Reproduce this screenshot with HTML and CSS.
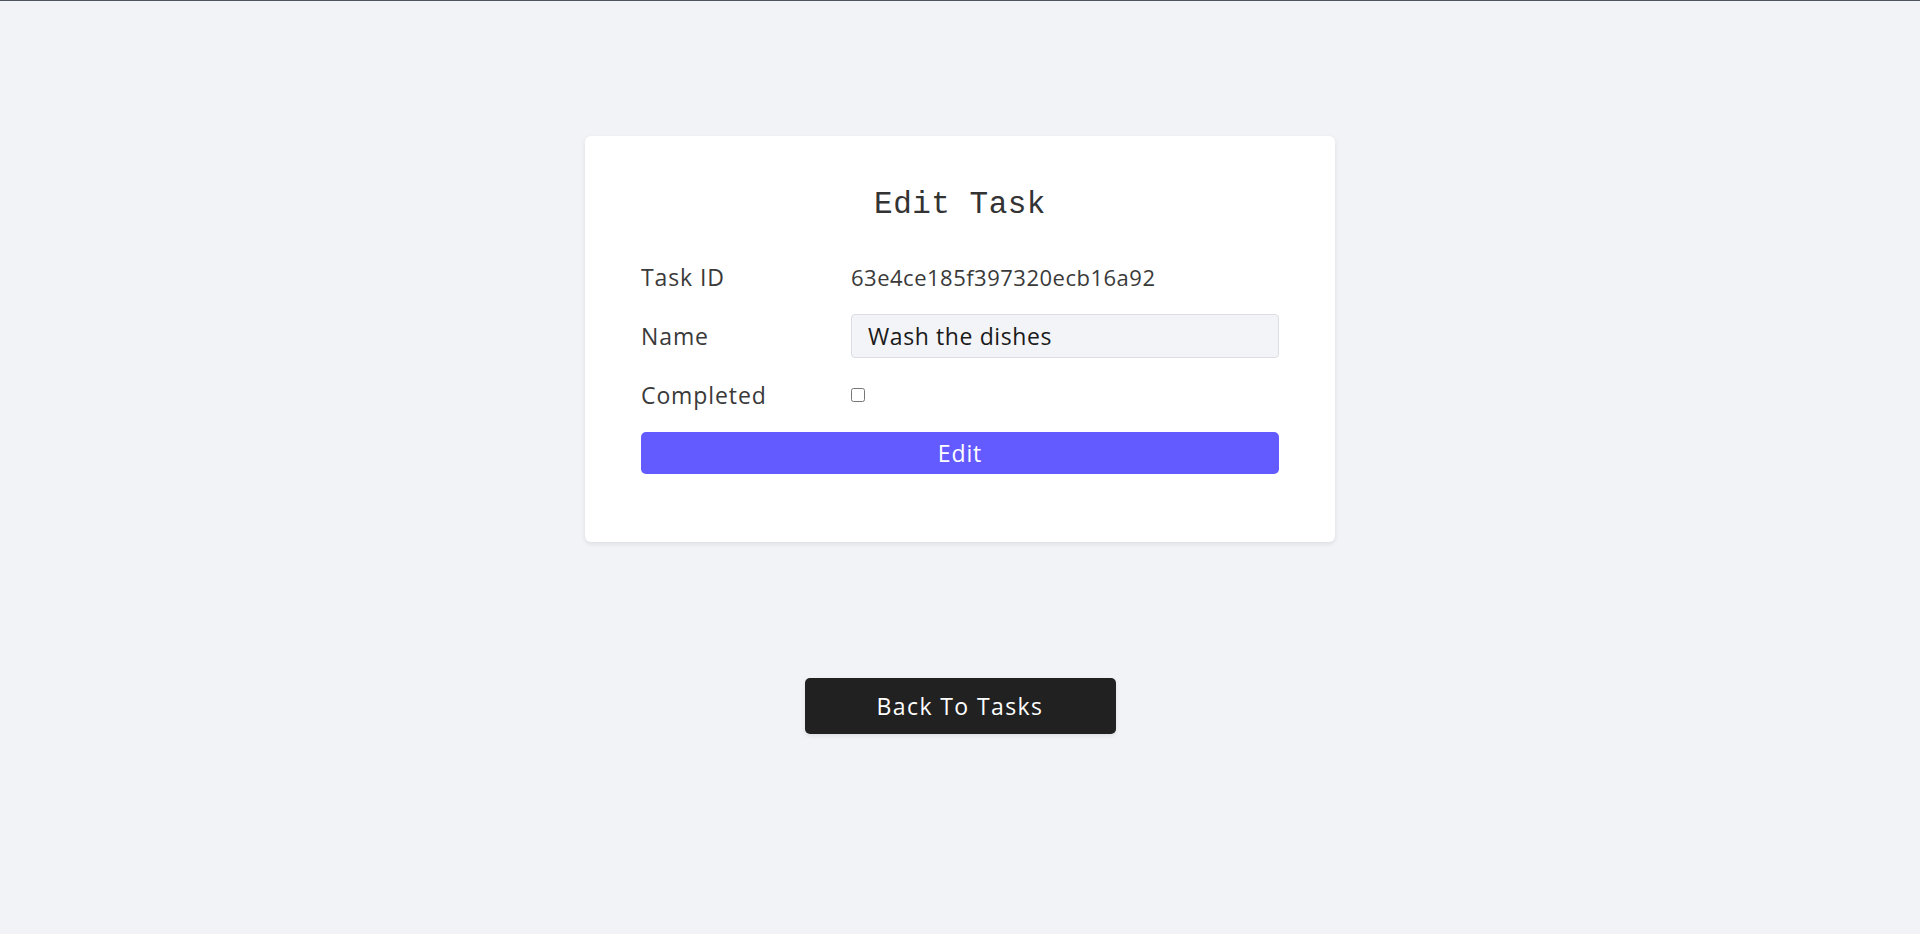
FILE: index.html
```html
<!DOCTYPE html>
<html lang="en">
<head>
<meta charset="utf-8">
<title>Edit Task</title>
<link rel="stylesheet" href="styles.css">
</head>
<body>
<main class="page">
  <form class="card">
    <h1 class="card-title">Edit Task</h1>
    <div class="form-grid">
      <div class="label">Task ID</div>
      <div class="value">63e4ce185f397320ecb16a92</div>
      <label class="label" for="name">Name</label>
      <div class="value"><input id="name" class="text-input" type="text" value="Wash the dishes"></div>
      <label class="label" for="completed">Completed</label>
      <div class="value"><input id="completed" class="check" type="checkbox"></div>
    </div>
    <button type="button" class="btn-edit">Edit</button>
  </form>
  <a class="btn-back" href="#">Back To Tasks</a>
</main>
</body>
</html>
```
FILE: styles.css
```css
* { box-sizing: border-box; }
html, body { margin: 0; padding: 0; }
body {
  background: #f2f3f7;
  border-top: 1px solid #50545c;
  font-family: "Open Sans", "Liberation Sans", sans-serif;
  color: #333;
  min-height: 934px;
}
.page {
  display: flex;
  flex-direction: column;
  align-items: center;
  padding-top: 135px;
}
.card {
  width: 750px;
  background: #fff;
  border-radius: 6px;
  box-shadow: 0 2px 5px rgba(0, 0, 0, 0.09);
  padding: 50px 56px 68px;
  display: flex;
  flex-direction: column;
}
.card-title {
  margin: 0 0 31px;
  text-align: center;
  font-family: "Liberation Mono", "DejaVu Sans Mono", monospace;
  font-weight: 400;
  font-size: 31px;
  line-height: 38px;
  letter-spacing: 0.5px;
  color: #333;
}
.form-grid {
  display: grid;
  grid-template-columns: 210px 1fr;
  grid-auto-rows: 44px;
  row-gap: 15px;
  align-items: center;
}
.label, .value {
  color: #3a3a3a;
  display: flex;
  align-items: center;
  height: 44px;
}
.label {
  font-size: 23px;
  letter-spacing: 0.9px;
}
.value {
  font-size: 22px;
  letter-spacing: 0.5px;
}
.text-input {
  width: 100%;
  height: 44px;
  border: 1px solid #dcdde3;
  border-radius: 4px;
  background: #f3f4f7;
  padding: 0 16px;
  font-family: "Open Sans", "Liberation Sans", sans-serif;
  font-size: 23px;
  letter-spacing: 0.6px;
  color: #1a1a1a;
  outline: none;
}
.check {
  margin: 0;
  width: 14px;
  height: 14px;
}
.btn-edit {
  margin-top: 15px;
  height: 42px;
  border: 0;
  border-radius: 5px;
  background: #635bff;
  color: #fff;
  font-family: "Open Sans", "Liberation Sans", sans-serif;
  font-size: 23px;
  letter-spacing: 0.9px;
  cursor: pointer;
}
.btn-back {
  margin-top: 136px;
  width: 311px;
  height: 56px;
  border-radius: 5px;
  background: #212121;
  color: #fff;
  text-decoration: none;
  font-size: 23px;
  letter-spacing: 1.4px;
  display: flex;
  align-items: center;
  justify-content: center;
  box-shadow: 0 2px 4px rgba(0, 0, 0, 0.08);
}
```
